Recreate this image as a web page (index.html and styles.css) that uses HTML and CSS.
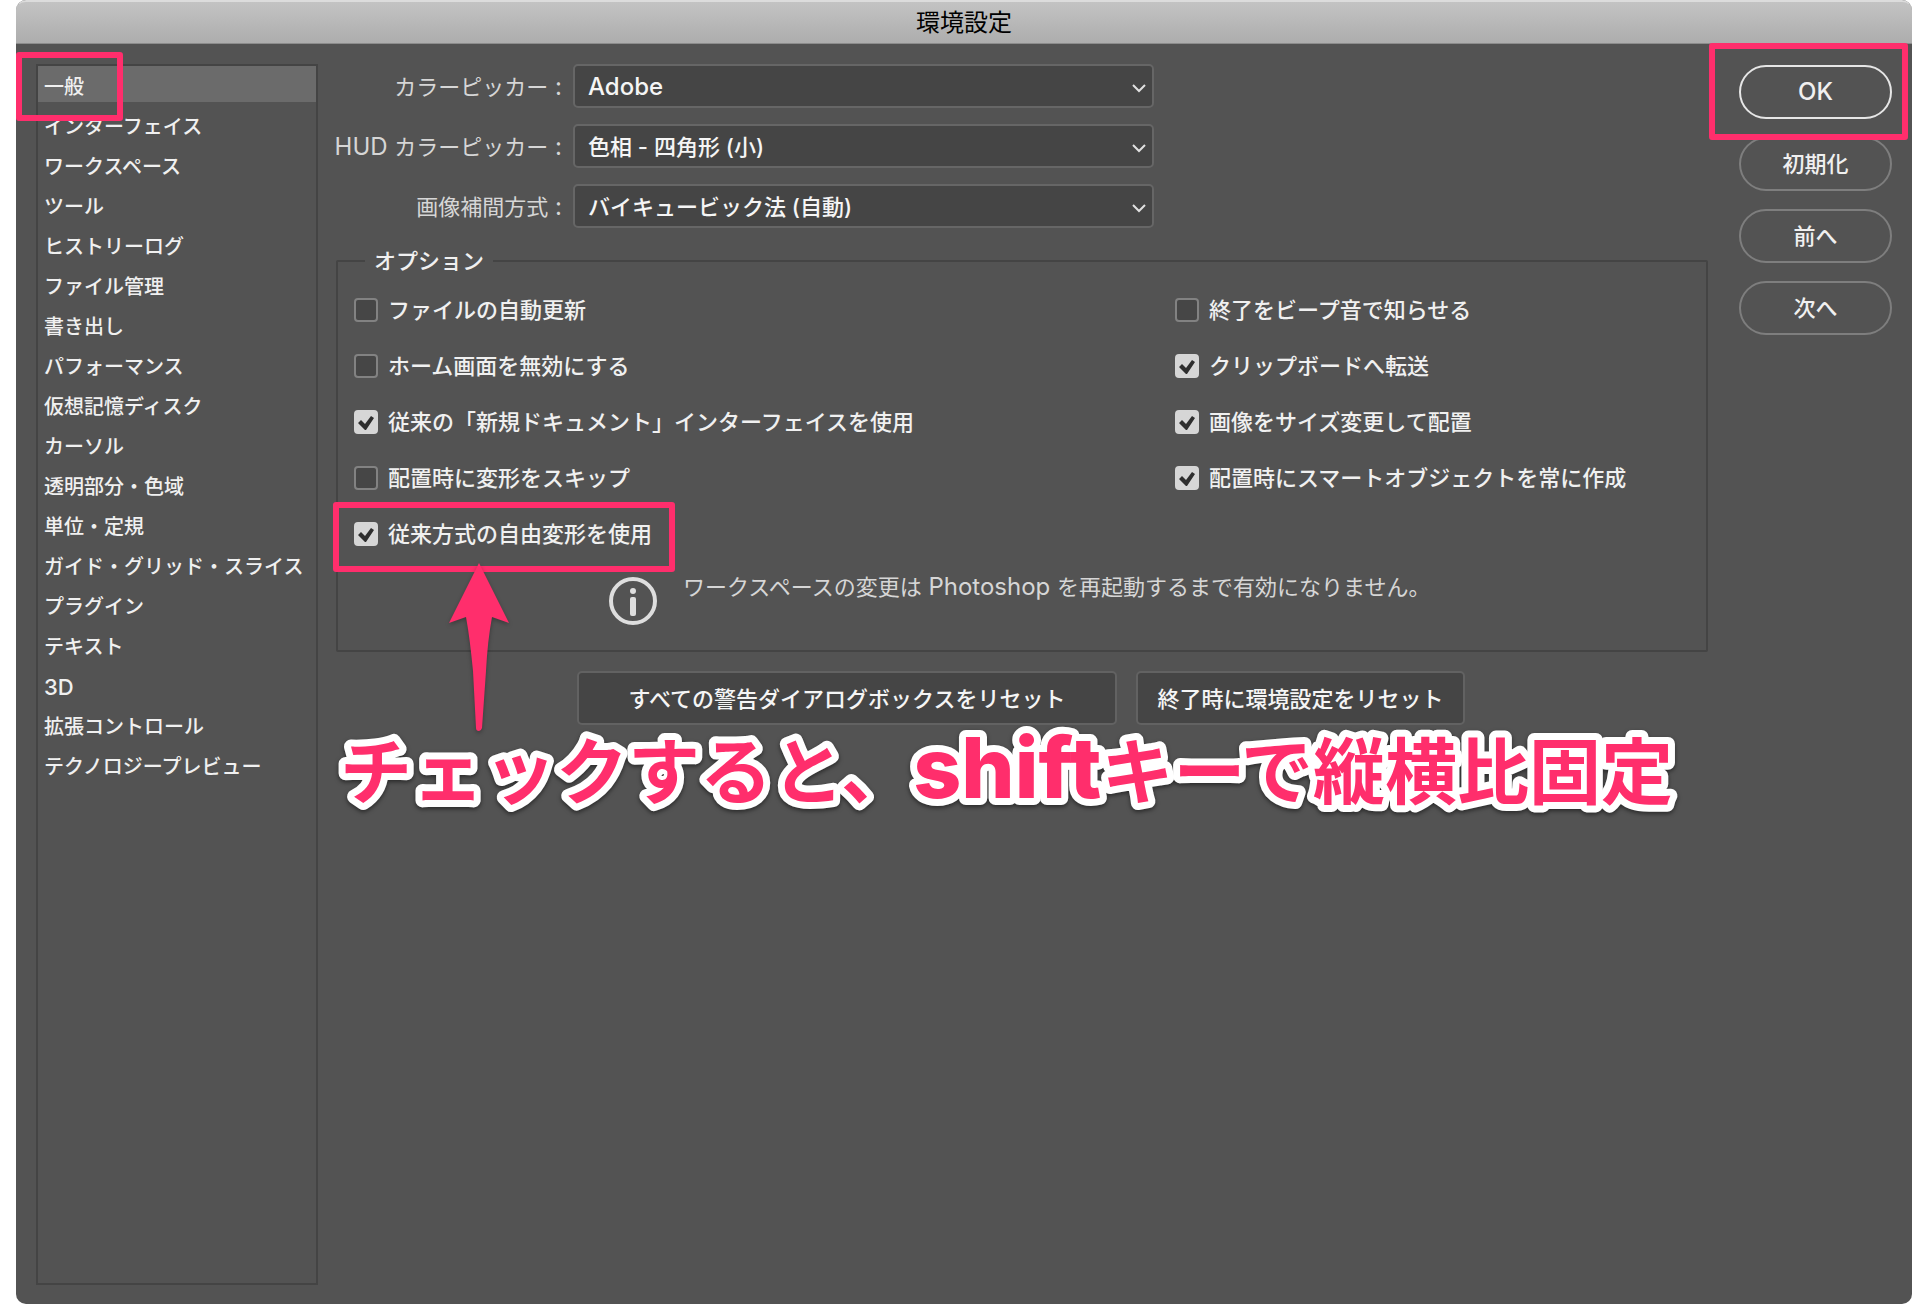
FILE: index.html
```html
<!DOCTYPE html>
<html lang="ja">
<head>
<meta charset="utf-8">
<title>環境設定</title>
<meta name="viewport" content="width=device-width, initial-scale=1">
<link rel="stylesheet" href="styles.css">
</head>
<body>
<div class="window">
  <header class="titlebar"><h1 class="title">環境設定</h1></header>
  <div class="panes">
    <nav class="sidebar" aria-label="カテゴリ">
      <ul class="categories">
        <li class="category marked"><a class="category-link current" href="#general" aria-current="page">一般</a><span class="mark mark-general"></span></li>
        <li class="category"><a class="category-link" href="#interface">インターフェイス</a></li>
        <li class="category"><a class="category-link" href="#workspace">ワークスペース</a></li>
        <li class="category"><a class="category-link" href="#tools">ツール</a></li>
        <li class="category"><a class="category-link" href="#history">ヒストリーログ</a></li>
        <li class="category"><a class="category-link" href="#files">ファイル管理</a></li>
        <li class="category"><a class="category-link" href="#export">書き出し</a></li>
        <li class="category"><a class="category-link" href="#performance">パフォーマンス</a></li>
        <li class="category"><a class="category-link" href="#scratch">仮想記憶ディスク</a></li>
        <li class="category"><a class="category-link" href="#cursors">カーソル</a></li>
        <li class="category"><a class="category-link" href="#transparency">透明部分・色域</a></li>
        <li class="category"><a class="category-link" href="#units">単位・定規</a></li>
        <li class="category"><a class="category-link" href="#guides">ガイド・グリッド・スライス</a></li>
        <li class="category"><a class="category-link" href="#plugins">プラグイン</a></li>
        <li class="category"><a class="category-link" href="#type">テキスト</a></li>
        <li class="category"><a class="category-link category-latin" href="#three-d">3D</a></li>
        <li class="category"><a class="category-link" href="#controls">拡張コントロール</a></li>
        <li class="category"><a class="category-link" href="#preview">テクノロジープレビュー</a></li>
      </ul>
    </nav>

    <main class="content">
      <div class="pickers">
        <label class="picker-label" for="picker">カラーピッカー<span class="latin"> :</span></label>
        <div class="picker">
          <select class="picker-select latin" id="picker"><option>Adobe</option></select>
          <svg class="chevron" viewBox="0 0 14 9" aria-hidden="true"><path d="M1 1l6 6 6-6"/></svg>
        </div>
        <label class="picker-label" for="hud"><span class="latin">HUD </span>カラーピッカー<span class="latin"> :</span></label>
        <div class="picker">
          <select class="picker-select" id="hud"><option>色相 - 四角形 (小)</option></select>
          <svg class="chevron" viewBox="0 0 14 9" aria-hidden="true"><path d="M1 1l6 6 6-6"/></svg>
        </div>
        <label class="picker-label" for="interpolation">画像補間方式<span class="latin"> :</span></label>
        <div class="picker">
          <select class="picker-select" id="interpolation"><option>バイキュービック法 (自動)</option></select>
          <svg class="chevron" viewBox="0 0 14 9" aria-hidden="true"><path d="M1 1l6 6 6-6"/></svg>
        </div>
      </div>

      <fieldset class="options">
        <legend class="legend">オプション</legend>
        <div class="columns">
          <div class="column">
            <label class="option"><input class="tick" type="checkbox">ファイルの自動更新</label>
            <label class="option"><input class="tick" type="checkbox">ホーム画面を無効にする</label>
            <label class="option"><input class="tick" type="checkbox" checked>従来の「新規ドキュメント」インターフェイスを使用</label>
            <label class="option"><input class="tick" type="checkbox">配置時に変形をスキップ</label>
            <label class="option marked"><input class="tick" type="checkbox" checked>従来方式の自由変形を使用<span class="mark mark-option"></span>
              <svg class="arrow" viewBox="0 0 60 170" aria-hidden="true"><path d="M30 0L60 60L43 54C40 70 38 88 37 108L33 165Q32 168 30 168Q27 168 27 165L24 108C22 88 20 70 17 54L0 60Z"/></svg>
            </label>
          </div>
          <div class="column">
            <label class="option"><input class="tick" type="checkbox">終了をビープ音で知らせる</label>
            <label class="option"><input class="tick" type="checkbox" checked>クリップボードへ転送</label>
            <label class="option"><input class="tick" type="checkbox" checked>画像をサイズ変更して配置</label>
            <label class="option"><input class="tick" type="checkbox" checked>配置時にスマートオブジェクトを常に作成</label>
          </div>
        </div>
        <div class="notice">
          <svg class="info" viewBox="0 0 50 50" aria-hidden="true"><circle class="info-ring" cx="25" cy="25" r="22"/><circle cx="25" cy="15" r="3"/><rect x="22" y="21" width="6" height="19" rx="2"/></svg>
          <p class="notice-text">ワークスペースの変更は<span class="latin"> Photoshop </span>を再起動するまで有効になりません。</p>
        </div>
      </fieldset>

      <div class="resets">
        <button class="reset reset-wide" type="button">すべての警告ダイアログボックスをリセット</button>
        <button class="reset" type="button">終了時に環境設定をリセット</button>
        <svg class="caption" width="1350" height="96"><text x="0" y="71">チェックすると、<tspan class="caption-latin">shift</tspan>キーで縦横比固定</text></svg>
      </div>
    </main>

    <div class="actions">
      <div class="marked"><button class="action primary latin" type="button">OK</button><span class="mark mark-ok"></span></div>
      <button class="action" type="button">初期化</button>
      <button class="action" type="button">前へ</button>
      <button class="action" type="button">次へ</button>
    </div>
  </div>
</div>
</body>
</html>
```
FILE: styles.css
```css
* { box-sizing: border-box; }

body {
  margin: 0;
  background: #fff;
  color: #f0f0f0;
  font: 22px/24px Inter, "Noto Sans CJK JP", sans-serif;
}

.window {
  display: flex;
  flex-direction: column;
  min-height: 100vh;
  margin-left: 16px;
  border-radius: 10px;
  background: #535353;
}

.titlebar {
  height: 44px;
  border-top: 2px solid #dcdcdc;
  border-bottom: 1px solid #8c8c8c;
  border-radius: 10px 10px 0 0;
  background: linear-gradient(#c3c3c3, #adadad);
}

.title {
  margin: 0;
  color: #000;
  font-size: 24px;
  font-weight: 400;
  line-height: 42px;
  text-align: center;
}

.panes {
  display: flex;
  flex: 1;
  padding: 20px 20px 19px;
}

.sidebar {
  flex: 0 0 282px;
  border: 2px solid #444;
}

.categories {
  display: grid;
  gap: 4px;
  margin: 0;
  padding: 0;
  list-style: none;
}

.category-link {
  display: block;
  height: 36px;
  padding: 3px 6px 0;
  color: inherit;
  font-size: 20px;
  font-weight: 500;
  line-height: 36px;
  text-decoration: none;
  white-space: nowrap;
}

.category-latin { font-size: 22px; }

.current { background: #6b6b6b; }

.content {
  flex: 1;
  min-width: 0;
  margin: 0 31px 0 18px;
}

.pickers {
  display: grid;
  grid-template-columns: 226px minmax(0, 581px);
  gap: 16px 11px;
  align-items: center;
}

.picker-label {
  justify-self: end;
  padding-top: 2px;
  color: #d6d6d6;
  white-space: nowrap;
}

.picker { position: relative; }

.picker-select {
  display: block;
  width: 100%;
  height: 44px;
  padding: 2px 13px 0;
  border: 2px solid #666;
  border-radius: 5px;
  background: #454545;
  color: #f5f5f5;
  font: inherit;
  font-weight: 500;
  appearance: none;
}

.chevron {
  position: absolute;
  top: 20px;
  right: 8px;
  width: 14px;
  height: 9px;
  fill: none;
  stroke: #e0e0e0;
  stroke-width: 2;
  pointer-events: none;
}

.options {
  min-width: 0;
  margin: 21px 0 0;
  padding: 25px 16px 24px;
  border: 2px solid #444;
  border-radius: 2px;
}

.legend {
  margin-left: 11px;
  padding: 0 9px;
  font-weight: 500;
}

.columns {
  display: grid;
  grid-template-columns: 1fr 515px;
}

.column {
  display: grid;
  gap: 32px;
  align-content: start;
  justify-items: start;
}

.option {
  display: flex;
  gap: 10px;
  align-items: center;
  height: 24px;
  font-weight: 500;
  line-height: 26px;
  white-space: nowrap;
}

.tick {
  position: relative;
  width: 24px;
  height: 24px;
  margin: 0;
  border: 2px solid #828282;
  border-radius: 4px;
  background: #464646;
  appearance: none;
}

.tick:checked {
  border-color: #d6d6d6;
  background: #d6d6d6;
}

.tick:checked::before {
  content: "";
  position: absolute;
  inset: -2px;
  background: #2e2e2e;
  clip-path: polygon(4px 13px, 7px 10px, 11px 14px, 17px 6px, 20px 8px, 12px 20px, 11px 20px);
}

.notice {
  display: flex;
  gap: 25px;
  margin: 30px 0 0 254px;
}

.info {
  flex: none;
  width: 50px;
  height: 50px;
  fill: #dedede;
}

.info-ring {
  fill: none;
  stroke: #dedede;
  stroke-width: 4;
}

.notice-text {
  margin: 0;
  color: #d6d6d6;
  line-height: 22px;
}

.resets {
  position: relative;
  display: flex;
  gap: 19px;
  margin-top: 19px;
  padding-left: 241px;
}

.reset {
  width: 329px;
  height: 54px;
  padding: 2px 0 0;
  border: 2px solid #626262;
  border-radius: 5px;
  background: #454545;
  color: #f5f5f5;
  font: inherit;
  font-weight: 500;
  white-space: nowrap;
}

.reset-wide { width: 540px; }

.actions {
  display: flex;
  flex: 0 0 153px;
  flex-direction: column;
  gap: 18px;
  padding-top: 1px;
}

.action {
  display: block;
  width: 100%;
  height: 54px;
  padding: 0;
  border: 2px solid #7e7e7e;
  border-radius: 27px;
  background: none;
  color: #f0f0f0;
  font: inherit;
  font-weight: 500;
}

.primary { border-color: #e6e6e6; }

/* Latin words are set a size up beside the kana */
.latin { font-size: 24px; }

/* Highlights drawn over the dialog */
.marked { position: relative; }

.mark {
  position: absolute;
  z-index: 1;
  border: 6px solid #ff2e6c;
  border-radius: 3px;
  pointer-events: none;
}

.mark-general {
  top: -14px;
  left: -22px;
  width: 107px;
  height: 69px;
}

.mark-option {
  inset: -20px -24px -26px -21px;
}

.option .mark-option { right: -13px; }

.mark-ok {
  inset: -22px -16px -21px -30px;
}

.arrow {
  position: absolute;
  z-index: 2;
  top: 41px;
  left: 95px;
  width: 60px;
  height: 170px;
  overflow: visible;
  fill: #ff2e6c;
  filter: drop-shadow(0 2px 2px rgba(0, 0, 0, 0.3));
  pointer-events: none;
}

.caption {
  position: absolute;
  top: 56px;
  left: 4px;
  overflow: visible;
  fill: #ff2e6c;
  stroke: #fff;
  stroke-width: 14px;
  stroke-linejoin: round;
  paint-order: stroke fill;
  font-size: 72px;
  font-weight: 700;
  filter: drop-shadow(0 2px 2px rgba(0, 0, 0, 0.5));
  pointer-events: none;
}

.caption-latin {
  font-size: 84px;
  font-weight: 800;
}
```
